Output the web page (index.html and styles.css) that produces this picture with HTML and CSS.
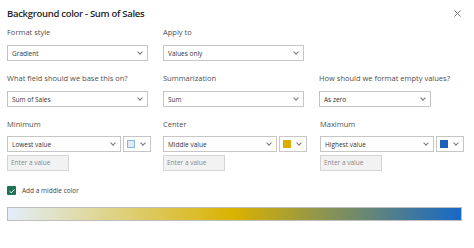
FILE: index.html
```html
<!DOCTYPE html>
<html>
<head>
    <title>Background color - Sum of Sales</title>
    <meta charset="UTF-8">
    <link rel="stylesheet" href="styles.css">
</head>
<body>
    <!-- Header -->
    <div class="dialog-header">
        <h3>Background color - Sum of Sales</h3>
        <span class="close-btn">
            <svg width="7" height="7" viewBox="0 0 7 7"><path d="M0.5 0.5 L6.5 6.5 M6.5 0.5 L0.5 6.5" stroke="#666" stroke-width="0.9" fill="none"/></svg>
        </span>
    </div>

    <!-- Format style / Apply to -->
    <div class="field-row">
        <div class="field">
            <div class="field-label">Format style</div>
            <div class="dropdown"><span>Gradient</span><i class="chev"></i></div>
        </div>
        <div class="field">
            <div class="field-label">Apply to</div>
            <div class="dropdown"><span>Values only</span><i class="chev"></i></div>
        </div>
    </div>

    <!-- Base field / Summarization / Empty values -->
    <div class="field-row">
        <div class="field">
            <div class="field-label">What field should we base this on?</div>
            <div class="dropdown"><span>Sum of Sales</span><i class="chev"></i></div>
        </div>
        <div class="field">
            <div class="field-label">Summarization</div>
            <div class="dropdown"><span>Sum</span><i class="chev"></i></div>
        </div>
        <div class="field field-narrow">
            <div class="field-label">How should we format empty values?</div>
            <div class="dropdown"><span>As zero</span><i class="chev"></i></div>
        </div>
    </div>

    <!-- Min / Center / Max -->
    <div class="stop-row">
        <div class="stop">
            <div class="field-label">Minimum</div>
            <div class="stop-controls">
                <div class="dropdown"><span>Lowest value</span><i class="chev"></i></div>
                <div class="color-picker"><b class="swatch swatch-min"></b><i class="chev"></i></div>
            </div>
            <div class="value-input">Enter a value</div>
        </div>
        <div class="stop">
            <div class="field-label">Center</div>
            <div class="stop-controls">
                <div class="dropdown"><span>Middle value</span><i class="chev"></i></div>
                <div class="color-picker"><b class="swatch swatch-mid"></b><i class="chev"></i></div>
            </div>
            <div class="value-input">Enter a value</div>
        </div>
        <div class="stop">
            <div class="field-label">Maximum</div>
            <div class="stop-controls">
                <div class="dropdown"><span>Highest value</span><i class="chev"></i></div>
                <div class="color-picker"><b class="swatch swatch-max"></b><i class="chev"></i></div>
            </div>
            <div class="value-input">Enter a value</div>
        </div>
    </div>

    <!-- Middle color toggle -->
    <label class="check-row">
        <span class="checkbox">
            <svg width="8" height="8" viewBox="0 0 8 8"><path d="M1.6 4.2 L3.3 5.8 L6.5 2.4" stroke="#fff" stroke-width="1" fill="none"/></svg>
        </span>
        Add a middle color
    </label>

    <!-- Gradient preview -->
    <div class="gradient-bar"></div>
</body>
</html>
```

FILE: styles.css
```css
body {
    margin: 0;
    padding: 0 7px;
    width: 474px;
    height: 248px;
    box-sizing: border-box;
    font-family: 'Open Sans', 'Noto Sans', sans-serif;
    color: #333;
    background-color: #fff;
    overflow: hidden;
}

/* --- Header --- */
.dialog-header {
    display: flex;
    justify-content: space-between;
    align-items: center;
    height: 26px;
}
h3 {
    margin: 0;
    font-size: 9.5px;
    font-weight: 600;
    color: #252423;
    letter-spacing: -0.3px;
}
.close-btn {
    display: flex;
    margin-right: 6px;
}

/* --- Fields --- */
.field-row {
    display: flex;
    gap: 15px;
    margin-bottom: 11px;
}
.field { width: 141px; }
.field-narrow { width: 112px; }
.field-label {
    font-size: 7.5px;
    color: #505050;
    height: 12px;
    line-height: 12px;
    margin-bottom: 7px;
    white-space: nowrap;
}
.dropdown {
    height: 16px;
    box-sizing: border-box;
    border: 1px solid #c8c6c4;
    background: #fff;
    display: flex;
    align-items: center;
    justify-content: space-between;
    padding: 0 5px 0 4px;
    font-size: 6.5px;
    color: #333;
}
.chev {
    width: 3px;
    height: 3px;
    border-right: 0.8px solid #777;
    border-bottom: 0.8px solid #777;
    transform: rotate(45deg);
    margin-top: -2px;
}

/* --- Gradient stops --- */
.stop-row {
    display: flex;
    gap: 12px;
    margin-top: 7px;
}
.stop { width: 144px; }
.stop:last-child { margin-left: 1px; }
.stop .field-label { margin-bottom: 6px; }
.stop-controls {
    display: flex;
    gap: 2px;
}
.stop-controls .dropdown { flex: 1; }
.color-picker {
    width: 28px;
    height: 16px;
    box-sizing: border-box;
    border: 1px solid #c8c6c4;
    display: flex;
    align-items: center;
    justify-content: space-between;
    padding: 0 5px 0 3px;
}
.swatch {
    width: 8px;
    height: 8px;
    box-sizing: border-box;
}
.swatch-min { background: #deebf7; border: 1px solid #8fb2d9; }
.swatch-mid { background: #d9ae00; }
.swatch-max { background: #1762b8; }
.value-input {
    width: 62px;
    height: 16px;
    box-sizing: border-box;
    margin-top: 3px;
    border: 1px solid #d6d4d2;
    background: #f2f2f2;
    font-size: 6.5px;
    color: #888;
    line-height: 14px;
    padding-left: 3px;
}

/* --- Checkbox --- */
.check-row {
    display: flex;
    align-items: center;
    gap: 6px;
    margin-top: 15px;
    font-size: 6.5px;
    color: #444;
}
.checkbox {
    width: 9px;
    height: 9px;
    background: #1e7356;
    border-radius: 1px;
    display: flex;
    align-items: center;
    justify-content: center;
}

/* --- Gradient bar --- */
.gradient-bar {
    margin-top: 12px;
    width: 455px;
    height: 14px;
    box-sizing: border-box;
    border: 1px solid #bdbdbd;
    background: linear-gradient(to right, #e3eefa 0%, #dab200 50%, #1668c8 100%);
}
```
